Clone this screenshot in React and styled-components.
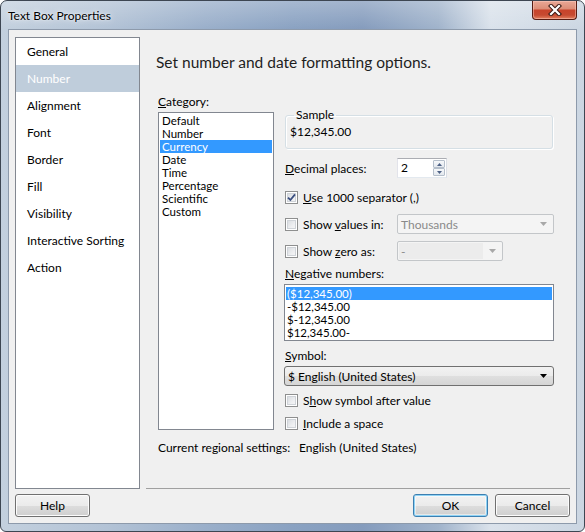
import React from 'react';
import styled, { createGlobalStyle } from 'styled-components';

const Global = createGlobalStyle`
  html, body { margin: 0; padding: 0; background: #ffffff; }
  body { font-family: Lato, "Liberation Sans", sans-serif; font-size: 12px; color: #000; }
  * { box-sizing: border-box; }
`;

const Window = styled.div`
  width: 585px;
  height: 532px;
  display: flex;
  flex-direction: column;
  border: 1px solid #3d4652;
  border-radius: 7px 7px 6px 6px;
  overflow: hidden;
  background:
    linear-gradient(180deg, rgba(255,255,255,0.25) 0px, rgba(255,255,255,0) 28px),
    linear-gradient(90deg, #c3d0de 0%, #b3c3d6 18%, #9aafca 35%, #8aa2c2 50%, #859cbd 62%, #a0b3cb 75%, #dae2eb 84%, #cbd6e2 100%);
`;

const TitleBar = styled.div`
  height: 28px;
  flex: none;
  display: flex;
  align-items: flex-start;
  padding-left: 7px;
`;

const TitleText = styled.span`
  align-self: center;
  font-size: 12px;
  color: #000;
  text-shadow: 0 0 6px rgba(255,255,255,0.9), 0 0 2px rgba(255,255,255,0.8);
`;

const CloseButton = styled.div`
  margin-left: auto;
  margin-right: 7px;
  width: 45px;
  height: 19px;
  display: flex;
  align-items: center;
  justify-content: center;
  border: 1px solid #561c12;
  border-top: none;
  border-radius: 0 0 4px 4px;
  background: linear-gradient(180deg, #e9a896 0%, #dc8e78 42%, #c8442b 52%, #c64a30 78%, #e3805f 100%);
  box-shadow: inset 0 0 0 1px rgba(255,210,200,0.45);
`;

const Frame = styled.div`
  flex: 1;
  display: flex;
  padding: 0 7px 7px 7px;
`;

const Client = styled.div`
  flex: 1;
  display: flex;
  flex-direction: column;
  background: #f0f0f0;
  border: 1px solid #8d9aab;
  padding: 7px 6px 6px 6px;
`;

const MainRow = styled.div`
  height: 452px;
  display: flex;
  gap: 6px;
`;

const Nav = styled.div`
  width: 125px;
  flex: none;
  display: flex;
  flex-direction: column;
  background: #fff;
  border: 1px solid #828790;
`;

const NavItem = styled.div`
  height: 27px;
  display: flex;
  align-items: center;
  padding-left: 11px;
  font-size: 12px;
  color: ${p => (p.$active ? '#ffffff' : '#000000')};
  background: ${p => (p.$active ? '#bfcddb' : 'transparent')};
`;

const Content = styled.div`
  flex: 1;
  display: flex;
  flex-direction: column;
  padding: 15px 16px 0 10px;
  border-bottom: 1px solid #a0a0a0;
`;

const Heading = styled.h1`
  margin: 0;
  font-size: 15.5px;
  font-weight: normal;
  line-height: 20px;
  color: #1e1e1e;
`;

const Columns = styled.div`
  display: flex;
  margin-top: 22px;
  padding-left: 2px;
`;

const LeftCol = styled.div`
  width: 116px;
  flex: none;
  display: flex;
  flex-direction: column;
`;

const FieldLabel = styled.div`
  height: 16px;
  line-height: 16px;
  margin-top: ${p => p.$mt || 0}px;
  padding-left: ${p => p.$pl || 0}px;
`;

const ListBox = styled.div`
  margin-top: 2px;
  height: ${p => p.$h}px;
  background: #fff;
  border: 1px solid #828790;
  padding: ${p => p.$pad};
  font-size: 11.5px;
`;

const ListItem = styled.div`
  height: 13px;
  line-height: 13px;
  padding-left: ${p => p.$pl}px;
  white-space: nowrap;
  color: ${p => (p.$selected ? '#ffffff' : '#000000')};
  background: ${p => (p.$selected ? '#3399ff' : 'transparent')};
`;

const RightCol = styled.div`
  margin-left: 10px;
  width: 270px;
  flex: none;
  display: flex;
  flex-direction: column;
  padding-top: 14px;
`;

const Group = styled.fieldset`
  margin: 0 1px;
  height: 41px;
  border: 1px solid #d5dfe5;
  border-radius: 3px;
  box-shadow: inset 1px 1px 0 #ffffff, 1px 1px 0 #ffffff;
  padding: 2px 4px 0 4px;
`;

const Legend = styled.legend`
  margin-left: 4px;
  padding: 0 2px;
  font-size: 12px;
  line-height: 14px;
`;

const SampleValue = styled.div`
  line-height: 16px;
`;

const Row = styled.div`
  height: 20px;
  display: flex;
  align-items: center;
  padding-left: 1px;
  margin-top: ${p => p.$mt || 0}px;
`;

const RowLabel = styled.div`
  width: ${p => (p.$auto ? 'auto' : '112px')};
  flex: none;
  display: flex;
  align-items: center;
  gap: 5px;
  white-space: nowrap;
`;

const SpinBox = styled.div`
  width: 50px;
  height: 20px;
  display: flex;
  background: #fff;
  border: 1px solid;
  border-color: #abadb3 #dbdfe6 #e3e9ef #e2e3ea;
`;

const SpinValue = styled.div`
  flex: 1;
  padding-left: 3px;
  line-height: 18px;
`;

const SpinButtons = styled.div`
  width: 12px;
  margin: 1px 1px 1px 0;
  display: flex;
  flex-direction: column;
`;

const SpinButton = styled.div`
  flex: 1;
  display: flex;
  align-items: center;
  justify-content: center;
  border: 1px solid #b5bfcb;
  border-radius: 1px;
  background: linear-gradient(180deg, #f6f8fa 0%, #e3e8ee 100%);
`;

const Checkbox = styled.span`
  width: 13px;
  height: 13px;
  flex: none;
  display: flex;
  align-items: center;
  justify-content: center;
  border: 1px solid #8e8f8f;
  background: linear-gradient(135deg, #d2d6db 0%, #eeeff1 60%, #f8f8f8 100%);
  box-shadow: inset 0 0 0 1px #ffffff, inset 0 0 0 2px #cfd3d8;
`;

const SelectWrap = styled.div`
  margin-top: 2px;
`;

const Select = styled.div`
  width: ${p => p.$w}px;
  height: 20px;
  display: flex;
  align-items: center;
  padding-left: 3px;
  border-radius: ${p => (p.$disabled ? 2 : 3)}px;
  border: 1px solid ${p => (p.$disabled ? '#c3c6c9' : '#707070')};
  color: ${p => (p.$disabled ? '#8a8a8a' : '#000000')};
  background: ${p =>
    p.$disabled
      ? '#f4f4f4'
      : 'linear-gradient(180deg, #f2f2f2 0%, #ebebeb 50%, #dfdfdf 51%, #d5d5d5 100%)'};
`;

const SelectText = styled.span`
  flex: 1;
`;

const EditPart = styled.span`
  flex: 1;
  align-self: stretch;
  margin: 1px 0 1px -2px;
  padding-left: 2px;
  display: flex;
  align-items: center;
  background: #ececec;
`;

const Arrow = styled.span`
  width: 19px;
  flex: none;
  display: flex;
  align-items: center;
  justify-content: center;
`;

const RegionalRow = styled.div`
  display: flex;
  height: 16px;
  line-height: 16px;
  margin-top: 7px;
  padding-left: 2px;
`;

const RegionalLabel = styled.span`
  width: 141px;
`;

const ButtonRow = styled.div`
  margin-top: 5px;
  height: 23px;
  display: flex;
  gap: 7px;
`;

const Button = styled.button`
  width: 75px;
  height: 23px;
  padding: 0;
  font-family: inherit;
  font-size: 12px;
  color: #000;
  border-radius: 3px;
  border: 1px solid ${p => (p.$default ? '#3c7fb1' : '#707070')};
  background: linear-gradient(180deg, #f2f2f2 0%, #ebebeb 50%, #dddddd 51%, #cfcfcf 100%);
  box-shadow: ${p =>
    p.$default
      ? 'inset 0 0 0 1px #8fd3f5, inset 0 0 0 2px rgba(255,255,255,0.5)'
      : 'inset 0 0 0 1px #fcfcfc'};
  margin-left: ${p => (p.$push ? 'auto' : '0')};
`;

const DownArrow = ({ color }) => (
  <svg width="7" height="4" viewBox="0 0 7 4">
    <path d="M0 0 H7 L3.5 4 Z" fill={color} />
  </svg>
);

const Check = () => (
  <svg width="9" height="9" viewBox="0 0 9 9">
    <path d="M1 4.6 L3.4 7 L8 1.4" fill="none" stroke="#3b4f80" strokeWidth="1.8" />
  </svg>
);

const SpinArrow = ({ up }) => (
  <svg width="5" height="3" viewBox="0 0 5 3">
    <path d={up ? 'M0 3 H5 L2.5 0 Z' : 'M0 0 H5 L2.5 3 Z'} fill="#4d6185" />
  </svg>
);

const CloseIcon = () => (
  <svg width="14" height="12" viewBox="0 0 14 12">
    <path d="M3 2 L11 10 M11 2 L3 10" stroke="#3a1a14" strokeWidth="4.2" strokeLinecap="square" />
    <path d="M3 2 L11 10 M11 2 L3 10" stroke="#ffffff" strokeWidth="2.2" strokeLinecap="square" />
  </svg>
);

const navItems = ['General', 'Number', 'Alignment', 'Font', 'Border', 'Fill', 'Visibility', 'Interactive Sorting', 'Action'];
const categories = ['Default', 'Number', 'Currency', 'Date', 'Time', 'Percentage', 'Scientific', 'Custom'];
const negatives = ['($12,345.00)', '-$12,345.00', '$-12,345.00', '$12,345.00-'];

export default function App() {
  return (
    <>
      <Global />
      <Window>
        <TitleBar>
          <TitleText>Text Box Properties</TitleText>
          <CloseButton>
            <CloseIcon />
          </CloseButton>
        </TitleBar>
        <Frame>
          <Client>
            <MainRow>
              <Nav>
                {navItems.map(n => (
                  <NavItem key={n} $active={n === 'Number'}>{n}</NavItem>
                ))}
              </Nav>
              <Content>
                <Heading>Set number and date formatting options.</Heading>
                <Columns>
                  <LeftCol>
                    <FieldLabel><u>C</u>ategory:</FieldLabel>
                    <ListBox $h={318} $pad="1px">
                      {categories.map(c => (
                        <ListItem key={c} $pl={2} $selected={c === 'Currency'}>{c}</ListItem>
                      ))}
                    </ListBox>
                  </LeftCol>
                  <RightCol>
                    <Group>
                      <Legend>Sample</Legend>
                      <SampleValue>$12,345.00</SampleValue>
                    </Group>
                    <Row $mt={9}>
                      <RowLabel><span><u>D</u>ecimal places:</span></RowLabel>
                      <SpinBox>
                        <SpinValue>2</SpinValue>
                        <SpinButtons>
                          <SpinButton><SpinArrow up /></SpinButton>
                          <SpinButton><SpinArrow /></SpinButton>
                        </SpinButtons>
                      </SpinBox>
                    </Row>
                    <Row $mt={9}>
                      <RowLabel>
                        <Checkbox><Check /></Checkbox>
                        <span><u>U</u>se 1000 separator (,)</span>
                      </RowLabel>
                    </Row>
                    <Row $mt={7}>
                      <RowLabel>
                        <Checkbox />
                        <span>Show <u>v</u>alues in:</span>
                      </RowLabel>
                      <Select $w={157} $disabled>
                        <SelectText>Thousands</SelectText>
                        <Arrow><DownArrow color="#a8a8a8" /></Arrow>
                      </Select>
                    </Row>
                    <Row $mt={7}>
                      <RowLabel>
                        <Checkbox />
                        <span>Show <u>z</u>ero as:</span>
                      </RowLabel>
                      <Select $w={106} $disabled>
                        <EditPart>-</EditPart>
                        <Arrow><DownArrow color="#a8a8a8" /></Arrow>
                      </Select>
                    </Row>
                    <FieldLabel $mt={5} $pl={1}><u>N</u>egative numbers:</FieldLabel>
                    <ListBox $h={57} $pad="2px 1px">
                      {negatives.map((n, i) => (
                        <ListItem key={n} $pl={1} $selected={i === 0}>{n}</ListItem>
                      ))}
                    </ListBox>
                    <FieldLabel $mt={7} $pl={1}><u>S</u>ymbol:</FieldLabel>
                    <SelectWrap>
                      <Select $w={270}>
                        <SelectText>$ English (United States)</SelectText>
                        <Arrow><DownArrow color="#000000" /></Arrow>
                      </Select>
                    </SelectWrap>
                    <Row $mt={4}>
                      <RowLabel $auto>
                        <Checkbox />
                        <span>S<u>h</u>ow symbol after value</span>
                      </RowLabel>
                    </Row>
                    <Row $mt={3}>
                      <RowLabel $auto>
                        <Checkbox />
                        <span><u>I</u>nclude a space</span>
                      </RowLabel>
                    </Row>
                  </RightCol>
                </Columns>
                <RegionalRow>
                  <RegionalLabel>Current regional settings:</RegionalLabel>
                  <span>English (United States)</span>
                </RegionalRow>
              </Content>
            </MainRow>
            <ButtonRow>
              <Button>Help</Button>
              <Button $default $push>OK</Button>
              <Button>Cancel</Button>
            </ButtonRow>
          </Client>
        </Frame>
      </Window>
    </>
  );
}
